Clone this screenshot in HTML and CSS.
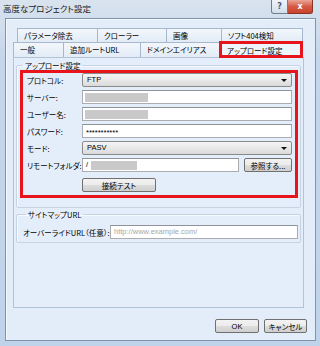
FILE: index.html
```html
<!DOCTYPE html>
<html lang="ja">

<head>
    <meta charset="utf-8">
    <title>高度なプロジェクト設定</title>
    <link rel="stylesheet" href="styles.css">
</head>

<body>
    <div class="window">
        <div class="titlebar">
            <span class="title">高度なプロジェクト設定</span>
            <span class="cap_btn help">?</span>
            <span class="cap_btn close">x</span>
        </div>

        <div class="client">
            <div class="tabs">
                <div class="tab_row back">
                    <span class="tab">パラメータ除去</span>
                    <span class="tab">クローラー</span>
                    <span class="tab">画像</span>
                    <span class="tab">ソフト404検知</span>
                </div>
                <div class="tab_row front">
                    <span class="tab">一般</span>
                    <span class="tab">追加ルートURL</span>
                    <span class="tab">ドメインエイリアス</span>
                    <span class="tab selected">アップロード設定</span>
                </div>
            </div>

            <div class="panel">
                <fieldset class="group upload">
                    <legend>アップロード設定</legend>
                    <div class="highlight">
                        <div class="row">
                            <span class="label">プロトコル:</span>
                            <div class="select">FTP<span class="arrow"></span></div>
                        </div>
                        <div class="row">
                            <span class="label">サーバー:</span>
                            <div class="input"><span class="blur"></span></div>
                        </div>
                        <div class="row">
                            <span class="label">ユーザー名:</span>
                            <div class="input"><span class="blur"></span></div>
                        </div>
                        <div class="row">
                            <span class="label">パスワード:</span>
                            <div class="input pass">***********</div>
                        </div>
                        <div class="row">
                            <span class="label">モード:</span>
                            <div class="select">PASV<span class="arrow"></span></div>
                        </div>
                        <div class="row">
                            <span class="label">リモートフォルダ:</span>
                            <div class="input folder">/<span class="blur short"></span></div>
                            <span class="btn browse">参照する...</span>
                        </div>
                        <div class="row test_row">
                            <span class="btn test">接続テスト</span>
                        </div>
                    </div>
                </fieldset>

                <fieldset class="group sitemap">
                    <legend>サイトマップURL</legend>
                    <div class="row">
                        <span class="label wide">オーバーライドURL（任意）:</span>
                        <div class="input placeholder">http://www.example.com/</div>
                    </div>
                </fieldset>
            </div>

            <div class="footer">
                <span class="btn ok">OK</span>
                <span class="btn cancel">キャンセル</span>
            </div>
        </div>
    </div>
</body>

</html>
```

FILE: styles.css
```css
/* dialog frame */

* {
    box-sizing: border-box;
}

body {
    margin: 0;
    width: 320px;
    height: 346px;
    overflow: hidden;
    font-family: "Noto Sans CJK JP", "Noto Sans", sans-serif;
    font-feature-settings: "palt";
    font-size: 7.5px;
    color: #000;
    background: #c9dbee;
}

.window {
    height: 346px;
    padding: 0 4px 5px 5px;
    background: linear-gradient(#d9e3ee, #c4d6ea 60px, #bfd3ea);
}

.titlebar {
    height: 18px;
    display: flex;
    align-items: flex-start;
    margin-left: -5px;
    margin-right: -4px;
}

.title {
    padding: 3px 0 0 3px;
    font-size: 8.5px;
    line-height: 11px;
    color: #1a1a1a;
    margin-right: auto;
}

.cap_btn {
    flex: none;
    height: 14px;
    display: flex;
    align-items: center;
    justify-content: center;
    font-family: "DejaVu Sans", sans-serif;
    font-size: 8px;
    font-weight: bold;
    border: 1px solid #6d7d92;
    border-top: none;
}

.help {
    width: 17px;
    color: #4a5a70;
    background: linear-gradient(#eef3f9, #d3deea);
    border-radius: 0 0 0 3px;
}

.close {
    width: 25px;
    margin-right: 7px;
    color: #fff;
    background: linear-gradient(#eba598, #d55a45 50%, #c8432c);
    border-color: #8a3426;
    border-left: none;
    border-radius: 0 0 3px 0;
}

.client {
    height: 323px;
    padding: 9px 8px 0 7px;
    background: #e3edfa;
    border: 1px solid #7f94ae;
    box-shadow: inset 1px 1px 0 #f4f8fd;
}

/* tabs */

.tab_row {
    display: grid;
    height: 14px;
}

.tab_row.back {
    margin-left: 4px;
    grid-template-columns: 80px 69px 55px 82px;
}

.tab_row.front {
    height: 15px;
    grid-template-columns: 50px 77px 80px 82px;
}

.tab {
    padding: 1px 0 0 6px;
    line-height: 12px;
    white-space: nowrap;
    border: 1px solid #a6b8cd;
    border-bottom: none;
    border-right: none;
    background: linear-gradient(#f3f7fc, #e2ebf6);
}

.tab:last-child {
    border-right: 1px solid #a6b8cd;
}

.tab.selected {
    padding-top: 2px;
    background: #eef4fc;
    outline: 3px solid #e8141c;
    outline-offset: -2px;
}

.panel {
    width: 291px;
    height: 251px;
    padding: 0 2px;
    border: 1px solid #b3c3d6;
    background: #e4eefb;
}

/* group boxes */

.group {
    margin: 3px 0 0;
    padding: 0 2px 9px 3px;
    border: 1px solid #c6d3e2;
    border-radius: 2px;
    box-shadow: inset 1px 1px 0 #f6f9fd;
}

.group legend {
    margin-left: 3px;
    padding: 0 2px;
    line-height: 9px;
}

.highlight {
    border: 3px solid #e8141c;
    padding: 0 3px 3px 4px;
    display: flex;
    flex-direction: column;
    gap: 3px;
}

.row {
    display: flex;
    align-items: center;
    height: 14px;
}

.label {
    width: 55px;
    flex: none;
    white-space: nowrap;
}

.label.wide {
    width: 87px;
}

.input,
.select {
    flex: 1;
    height: 14px;
    display: flex;
    align-items: center;
    padding-left: 3px;
    line-height: 12px;
    background: #fff;
    border: 1px solid #abadb3;
    border-top-color: #8e9299;
}

.select {
    padding-left: 4px;
    font-family: "Liberation Sans", sans-serif;
    font-size: 7.5px;
    background: linear-gradient(#f4f4f4, #e9e9e9 50%, #dadada);
    border-color: #8a8a8a;
    border-radius: 2px;
}

.arrow {
    margin-left: auto;
    margin-right: 4px;
    border-left: 3px solid transparent;
    border-right: 3px solid transparent;
    border-top: 3px solid #111;
}

.blur {
    width: 63px;
    height: 9px;
    background: #c9c9c9;
    margin-left: -1px;
}

.blur.short {
    width: 46px;
    margin-left: 3px;
}

.pass {
    font-family: "Liberation Sans", sans-serif;
    font-size: 7.5px;
    padding-top: 3px;
}

.folder {
    flex: none;
    width: 157px;
    font-family: "Liberation Sans", sans-serif;
}

.placeholder {
    font-family: "Liberation Sans", sans-serif;
    font-size: 7.5px;
    color: #a8a8a8;
}

.btn {
    height: 14px;
    display: flex;
    align-items: center;
    justify-content: center;
    border: 1px solid #707070;
    border-radius: 2px;
    background: linear-gradient(#f3f3f3, #ebebeb 50%, #dddddd 51%, #cfcfcf);
    white-space: nowrap;
}

.browse {
    width: 48px;
    margin-left: 5px;
}

.test_row {
    margin-top: 3px;
    padding-left: 55px;
}

.test {
    width: 74px;
}

.sitemap {
    margin-top: 2px;
    padding: 6px 2px 3px 6px;
}

.footer {
    display: flex;
    justify-content: flex-end;
    gap: 5px;
    margin-top: 11px;
}

.ok {
    width: 44px;
    font-family: "Liberation Sans", sans-serif;
    font-size: 7.5px;
}

.cancel {
    width: 43px;
}
```
